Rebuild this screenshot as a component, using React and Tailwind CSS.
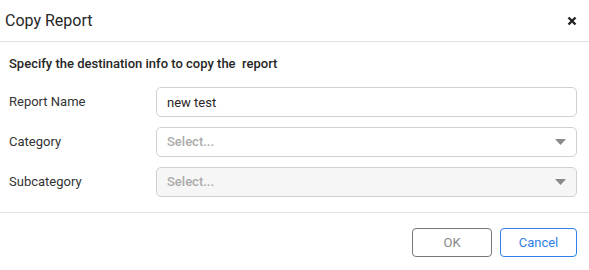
import { useState } from 'react'

function Caret() {
  return (
    <svg width="11" height="6" viewBox="0 0 11 6" className="shrink-0">
      <path d="M0 0 H11 L5.5 6 Z" fill="#8a8a8a" />
    </svg>
  )
}

function SelectBox({ disabled }) {
  return (
    <div
      className={`flex h-[30px] items-center justify-between rounded-[5px] border border-[#d0d0d0] pl-[10px] pr-[10px] ${
        disabled ? 'bg-[#f6f6f6]' : 'bg-white'
      }`}
    >
      <span className="text-[13px] font-medium text-[#ababab]">Select...</span>
      <Caret />
    </div>
  )
}

export default function App() {
  const [reportName, setReportName] = useState('new test')

  return (
    <div className="h-[270px] w-[589px] bg-white font-['Roboto',sans-serif] text-[#333]">
      <header className="flex h-[42px] items-center justify-between border-b border-[#e3e3e3] pl-[5px] pr-[12px]">
        <h2 className="text-[16px] text-[#262626]">Copy Report</h2>
        <svg width="10" height="10" viewBox="0 0 10 10">
          <path d="M1.5 1.5 L8.5 8.5 M8.5 1.5 L1.5 8.5" stroke="#222" strokeWidth="2.4" strokeLinecap="butt" />
        </svg>
      </header>

      <section className="border-b border-[#e3e3e3] pb-[15px] pl-[9px] pr-[12px] pt-[14px]">
        <p className="text-[13px] font-medium leading-[16px] text-[#262626]">Specify the destination info to copy the&nbsp; report</p>

        <div className="mt-[15px] space-y-[10px]">
          <div className="flex items-center">
            <label className="w-[147px] text-[13px] text-[#333]">Report Name</label>
            <input
              value={reportName}
              onChange={(e) => setReportName(e.target.value)}
              className="h-[30px] flex-1 rounded-[5px] border border-[#d0d0d0] px-[10px] text-[13px] text-[#262626] outline-none"
            />
          </div>
          <div className="flex items-center">
            <label className="w-[147px] text-[13px] text-[#333]">Category</label>
            <div className="flex-1">
              <SelectBox />
            </div>
          </div>
          <div className="flex items-center">
            <label className="w-[147px] text-[13px] text-[#333]">Subcategory</label>
            <div className="flex-1">
              <SelectBox disabled />
            </div>
          </div>
        </div>
      </section>

      <footer className="flex justify-end gap-[8px] pr-[12px] pt-[15px]">
        <button className="h-[29px] w-[80px] rounded-[4px] border border-[#777] text-[13px] text-[#888]">OK</button>
        <button className="h-[29px] w-[77px] rounded-[4px] border border-[#2f7fe8] text-[13px] text-[#2f7fe8]">Cancel</button>
      </footer>
    </div>
  )
}
